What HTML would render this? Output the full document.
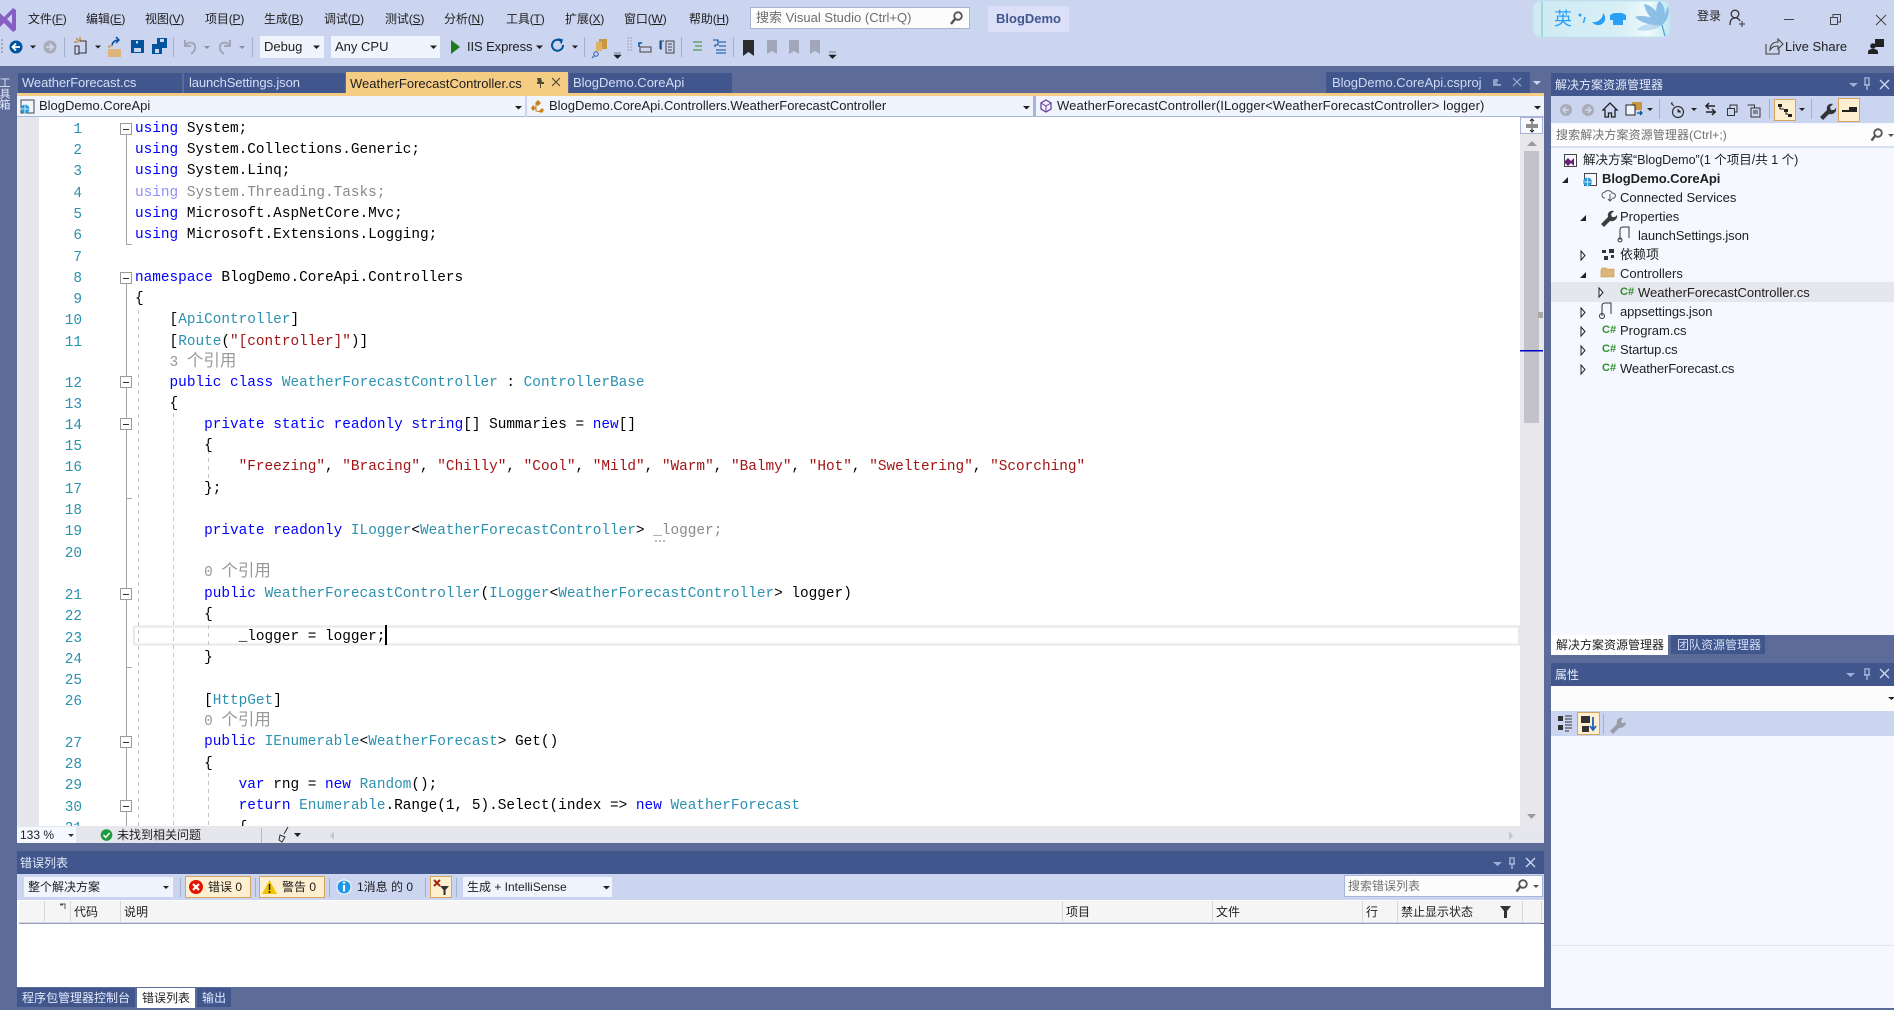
<!DOCTYPE html>
<html lang="zh-CN"><head><meta charset="utf-8"><title>BlogDemo - Visual Studio</title>
<style>
html,body{margin:0;padding:0;width:1894px;height:1010px;overflow:hidden;background:#ccd5f0}
body{position:relative;font-family:"Liberation Sans","Noto Sans CJK SC",sans-serif;font-size:13px;color:#1e1e1e}
svg.bg{position:absolute;left:0;top:0}
.t{position:absolute;white-space:nowrap;line-height:20px;height:20px}
.w{color:#e4ebfb}.z{font-size:12px}
.m{font-size:12px;letter-spacing:-.15px}
#code{position:absolute;left:0;top:1px;width:1520px;height:825px;overflow:hidden;font-family:"Liberation Mono","Noto Sans CJK SC",monospace;font-size:14.4px;color:#000}
#code div{position:absolute;white-space:pre;line-height:20px;height:20px;left:135px}
#code div.n{left:42px;width:40px;text-align:right;color:#2b91af;margin-top:1px}
#code div.l{color:#999}
#code div.l i{font-style:normal;font-size:16.5px}
b.k{font-weight:normal;color:#0000ff}b.y{font-weight:normal;color:#2b91af}b.s{font-weight:normal;color:#a31515}b.g{font-weight:normal;color:#8a8a8a}b.h{font-weight:normal;color:#8f8fff}
.tr{font-size:13px}
u{text-underline-offset:1px}
</style></head><body>
<svg class="bg" width="1894" height="1010" viewBox="0 0 1894 1010">
<rect width="1894" height="1010" fill="#ccd5f0"/>
<rect y="66" width="1894" height="944" fill="#5d6b99"/>
<!-- logo -->
<path d="M0 13l4 4 9-9 3 2v20l-3 2-9-9-4 4zM12 14l-5 5 5 5z" fill="#865fc5" fill-rule="evenodd"/>
<!-- search, badge -->
<rect x="750.500" y="7.500" width="219" height="21" fill="#fcfcfc" stroke="#a8b3cf"/>
<circle cx="958" cy="16" r="3.800" fill="none" stroke="#555" stroke-width="1.800"/><path d="M955 19l-4 5" stroke="#555" stroke-width="2.400"/>
<rect x="988" y="6" width="81" height="26" fill="#dbe0f8"/>
<!-- IME -->
<defs><linearGradient id="ime" x1="0" x2="1" y1="0" y2="0"><stop offset="0" stop-color="#cfeaf4"/><stop offset=".65" stop-color="#d8eff6"/><stop offset=".85" stop-color="#eefbfc"/><stop offset="1" stop-color="#bfe6f2"/></linearGradient></defs>
<rect x="1533" y="1" width="137" height="36" rx="8" fill="url(#ime)" stroke="#bde7ee"/>
<path d="M1542 1v36" stroke="#8dd5cf" stroke-width="1.500"/>
<circle cx="1580" cy="15" r="1.500" fill="#2aa0f5"/><path d="M1585 17l-1.500 6" stroke="#2aa0f5" stroke-width="1.500"/>
<path d="M1603 13a7 7 0 0 1-1 11c-3 2-8 1-10-2 5 1 11-3 11-9z" fill="#2aa0f5"/>
<path d="M1610 15l4-2h8l4 2 0 5-3 0v5h-10v-5l-3 0z" fill="#2aa0f5"/>
<g fill="#7fb6e3" opacity=".85"><path d="M1662 25c-6-6-8-16-3-24 6 3 8 15 3 24z"/><path d="M1662 25c-8-3-16-10-18-21 9 1 17 11 18 21z"/><path d="M1662 25c-7 1-20-1-27-8 8-3 22 1 27 8z"/><path d="M1662 25c-5 4-14 7-25 5 4-6 17-8 25-5z" opacity=".5"/><path d="M1662 25c2-7 4-15 6-19 2 6 0 14-6 19z"/></g>
<path d="M1662 25l3 11" stroke="#4c9acb" stroke-width="1.200" fill="none"/>
<!-- account -->
<circle cx="1735" cy="14" r="3.800" fill="none" stroke="#333" stroke-width="1.300"/><path d="M1730 25c0-5 2-7 5-7s4 1 5 3" fill="none" stroke="#333" stroke-width="1.300"/><path d="M1739 24h6M1742 21v6" stroke="#333"/>
<!-- window -->
<path d="M1784 19.500h10" stroke="#444"/>
<path d="M1830.500 17.500h7v7h-7zM1833 17v-2.500h7.500v7.500H1838" fill="none" stroke="#444"/>
<path d="M1876 15l10 10M1886 15l-10 10" stroke="#444"/>
<!-- share -->
<path d="M1766 44v10h13v-5M1770 50c0-5 3-8 8-8v-3l5 5-5 5v-3c-4 0-6 1-8 4z" fill="none" stroke="#444" stroke-width="1.100"/>
<rect x="1875" y="39" width="9" height="8" fill="#222"/><circle cx="1873" cy="46" r="2.800" fill="#222"/><path d="M1868 54v-2c0-2 2-3 5-3s5 1 5 3v2z" fill="#222"/>
<!-- toolbar -->
<circle cx="2" cy="40" r=".8" fill="#777"/><circle cx="2" cy="44" r=".8" fill="#777"/><circle cx="2" cy="48" r=".8" fill="#777"/><circle cx="2" cy="52" r=".8" fill="#777"/>
<circle cx="16" cy="47" r="6.500" fill="#00539c"/><path d="M20 47h-7M16 43.500l-3.500 3.500 3.500 3.500" stroke="#fff" stroke-width="1.800" fill="none"/>
<path d="M30 45.500h6l-3 3z M95 45.500h6l-3 3z M536 45.500h7l-3.500 3.500z M572 45.500h6l-3 3z" fill="#1e1e1e"/>
<circle cx="50" cy="47" r="6.500" fill="#a9acb6"/><path d="M46 47h7M49.500 43.500l3.500 3.500-3.500 3.500" stroke="#ccd5f0" stroke-width="1.800" fill="none"/>
<path d="M64.500 37v20M173.500 37v20M252.500 37v20M584.500 37v20M681.500 37v20M733.500 37v20" stroke="#a5b0cf"/>
<path d="M76 38l3 3M80 37v5M74 42h4" stroke="#c8811c" stroke-width="1.200"/><path d="M80 41h6v12h-7v-7" fill="none" stroke="#333" stroke-width="1.100"/><path d="M75 46h4v8h-4z" fill="none" stroke="#333"/>
<path d="M108 49h13v8h-13z" fill="#dcb67a"/><path d="M109 48v-2h4" stroke="#c8811c" fill="none"/><path d="M112 45c1-4 4-5 7-5m-3-3l3 3-3 3" stroke="#00539c" stroke-width="1.500" fill="none"/>
<path d="M131 40h13v13h-13zM134 40h7v4h-7z" fill="#00539c"/><rect x="136" y="41" width="2" height="2.500" fill="#ccd5f0"/><rect x="134" y="48" width="7" height="4" fill="#ccd5f0"/>
<path d="M157 38h10v10h-10zM152 44h10v10h-10z" fill="#00539c"/><rect x="160" y="39" width="4" height="3" fill="#ccd5f0"/><rect x="155" y="49" width="4" height="4" fill="#ccd5f0"/>
<path d="M185 40v6h6M185 46c3-5 9-4 10 0 .7 3-1 6-4 8" fill="none" stroke="#a1a7b8" stroke-width="2"/>
<path d="M230 40v6h-6M230 46c-3-5-9-4-10 0-.7 3 1 6 4 8" fill="none" stroke="#a1a7b8" stroke-width="2"/>
<path d="M204 46h6l-3 3zM239 46h6l-3 3z" fill="#8a8f9f"/>
<rect x="260" y="36" width="64" height="22" fill="#f0f4fd"/><rect x="331" y="36" width="109" height="22" fill="#f0f4fd"/>
<path d="M313 45.500h7l-3.500 3.500zM430 45.500h7l-3.500 3.500z" fill="#1e1e1e"/>
<path d="M451 40l9 7-9 7z" fill="#1f7a1f"/>
<path d="M563 45a5.500 5.500 0 1 1-2-4" fill="none" stroke="#00539c" stroke-width="2"/><path d="M558 38l5 1.500-1.500 5z" fill="#00539c"/>
<path d="M599 39h8v10h-8z" fill="#c8973f"/><path d="M596 42h6v9h-6z" fill="#e0b15f"/><circle cx="596" cy="54" r="2.200" fill="none" stroke="#1f5d9e"/><path d="M594 56l-2 2" stroke="#1f5d9e"/>
<path d="M614 55h7l-3.500 3.500zM614 53h7" fill="#1e1e1e" stroke="#1e1e1e" stroke-width=".6"/>
<g fill="#9097ab"><circle cx="628" cy="38" r=".7"/><circle cx="631" cy="38" r=".7"/><circle cx="628" cy="41" r=".7"/><circle cx="631" cy="41" r=".7"/><circle cx="628" cy="44" r=".7"/><circle cx="631" cy="44" r=".7"/><circle cx="628" cy="47" r=".7"/><circle cx="631" cy="47" r=".7"/><circle cx="628" cy="50" r=".7"/><circle cx="631" cy="50" r=".7"/></g>
<path d="M640 47h11v5h-11z" fill="none" stroke="#444"/><path d="M642 43h-3v4" fill="none" stroke="#00539c" stroke-width="1.500"/>
<path d="M664 41h-4v8M660 49h2M666 41h8v12h-8zM668 44h4M668 47h4M668 50h4" fill="none" stroke="#444"/><path d="M661 41v8" stroke="#00539c" stroke-width="1.500"/>
<path d="M693 42h9M695 46h7M693 50h9" stroke="#2c8a2c" stroke-width="1.100"/>
<path d="M713 40h5v5h-3v2M719 42h7M719 46h7M716 50h10M716 53h10" fill="none" stroke="#00539c" stroke-width="1.100"/>
<path d="M743 40h11v16l-5.500-4-5.500 4z" fill="#2b2b2b"/>
<path d="M767 40h10v14l-5-3-5 3z M789 40h10v14l-5-3-5 3z M810 40h10v14l-5-3-5 3z" fill="#a1a7b8"/>
<path d="M829 52h7M829 55h7l-3.500 3.500z" fill="#1e1e1e" stroke="#1e1e1e" stroke-width=".6"/>
<!-- left strip & tabs -->
<rect x="18" y="73" width="164" height="20" fill="#40568d"/><rect x="184" y="73" width="161" height="20" fill="#40568d"/>
<rect x="346" y="72" width="222" height="22" fill="#f5cc84"/><rect x="569" y="73" width="163" height="20" fill="#40568d"/>
<rect x="1326" y="72" width="204" height="21" fill="#40568d"/>
<rect x="17" y="93" width="1527" height="3" fill="#f5cc84"/>
<rect x="17" y="96" width="1527" height="20" fill="#f0f4fc"/><rect x="17" y="116" width="1527" height="1.500" fill="#a9b5d6"/>
<rect x="525" y="96" width="2" height="21" fill="#ccd5f0"/><rect x="1033" y="96" width="3" height="21" fill="#a9b5d6"/>
<path d="M537 78h4l1 4h2v2h-3v4h-1v-4h-3v-2h1z" fill="#514a37"/><path d="M552 78l8 8M560 78l-8 8" stroke="#514a37" stroke-width="1.200"/>
<path d="M1493 79l5 5h3v2h-8zM1494 79h4v3h-4z" fill="#92a0c8"/><path d="M1513 78l8 8M1521 78l-8 8" stroke="#9eacd0" stroke-width="1.200"/>
<path d="M1533 81h8l-4 4z" fill="#ccd5f0"/>
<!-- nav icons -->
<rect x="21" y="100" width="13" height="13" fill="#f0f4fc" stroke="#444"/><circle cx="25" cy="109" r="4.500" fill="#2a9ad6"/><path d="M20.500 109h9M25 104.500v9" stroke="#fff" stroke-width=".7"/>
<path d="M515 106h7l-3.500 3.500zM1023 106h7l-3.500 3.500zM1534 106h7l-3.500 3.500z" fill="#1e1e1e"/>
<path d="M538 100l3 3-3 3-3-3zM533 105l3 3-3 3-2-3zM542 108l2 2-2 3-3-2z" fill="#c8811c"/><path d="M536 104v7l5 1" stroke="#c8811c" fill="none"/>
<path d="M1046 100l5 3v6l-5 3-5-3v-6z" fill="#f0f4fc" stroke="#6b3fa0" stroke-width="1.300"/><path d="M1041 103l5 3 5-3M1046 106v6" stroke="#6b3fa0" fill="none"/>
<!-- editor -->
<rect x="17" y="117" width="1527" height="709" fill="#fff"/>
<rect x="17" y="117" width="22" height="709" fill="#e6e7ed"/>
<rect x="134" y="626.500" width="1385" height="18" fill="#fff" stroke="#e8e8ee" stroke-width="2.200"/>
<rect x="385" y="625" width="2" height="20" fill="#000"/>
<!-- indent guides -->
<g stroke="#c4c4c4" stroke-dasharray="4 4"><path d="M138.500 310V826M173.500 405V826M208.500 625V648M208.500 773V826M208.500 450V480"/></g>
<!-- unused-symbol dots -->
<path d="M655 541h2M659 541h2M663 541h2" stroke="#777"/>
<!-- outline -->
<g stroke="#a5a5a5" fill="none">
<path d="M126.500 134V244.500H132M126.500 283V826M126.500 667.500H132M126.500 498.500H132"/></g>
<g fill="#fff" stroke="#9a9a9a"><rect x="120.500" y="123.500" width="11" height="11"/><rect x="120.500" y="272.500" width="11" height="11"/><rect x="120.500" y="376.500" width="11" height="11"/><rect x="120.500" y="418.500" width="11" height="11"/><rect x="120.500" y="588.500" width="11" height="11"/><rect x="120.500" y="736.500" width="11" height="11"/><rect x="120.500" y="800.500" width="11" height="11"/></g>
<path d="M123 129.500h6M123 278.500h6M123 382.500h6M123 424.500h6M123 594.500h6M123 742.500h6M123 806.500h6" stroke="#333"/>
<!-- scroll -->
<rect x="1520" y="117" width="24" height="709" fill="#e8e8ec"/>
<rect x="1520.500" y="117.500" width="22" height="16" fill="#f7f9fe" stroke="#a9b5d6"/>
<path d="M1526 125h12M1526 127h12M1532 119v5M1532 128v4M1530 121l2-2 2 2M1530 130l2 2 2-2" stroke="#222" fill="none"/>
<path d="M1527 146l5-5 5 5z" fill="#9a9ba6"/><path d="M1527 814h9l-4.500 5z" fill="#9a9ba6"/>
<rect x="1524" y="151" width="15" height="272" fill="#c2c3c9"/>
<rect x="1538" y="312" width="5" height="6" fill="#a8a8a8"/>
<rect x="1520" y="350" width="23" height="1.500" fill="#0000c8"/>
<!-- status -->
<rect x="17" y="826" width="1527" height="17" fill="#e6e7ed"/>
<rect x="17" y="827" width="59" height="16" fill="#f6f8ff"/>
<path d="M68 834h6l-3 3z" fill="#333"/>
<circle cx="106.500" cy="835" r="5.800" fill="#1f9b3f"/><path d="M103.500 835l2.200 2.400 4-4.400" stroke="#fff" stroke-width="1.500" fill="none"/>
<path d="M261.500 828v15" stroke="#b8b9c4"/>
<path d="M288 827l-4 7M280 835l5 2-3 5-3-2z" fill="none" stroke="#333"/><path d="M294 833h7l-3.500 4z" fill="#222"/>
<path d="M334 831v9l-4-4.500z" fill="#c5c6cf"/><path d="M1509 831v9l4-4.500z" fill="#c5c6cf"/>
<!-- error list -->
<rect x="17" y="851" width="1527" height="23" fill="#40568d"/>
<rect x="17" y="874" width="1527" height="26" fill="#ccd5f0"/>
<rect x="17" y="900" width="1527" height="23" fill="#f5f5f5"/><rect x="19" y="922" width="1522" height="1.500" fill="#d4d6e2"/>
<rect x="17" y="924" width="1527" height="63" fill="#fff"/>
<rect x="17" y="900" width="2" height="24" fill="#fff"/><rect x="17" y="900" width="1527" height="1" fill="#fff"/>
<path d="M44.500 901v21M70.500 901v21M120.500 901v21M1062.500 901v21M1212.500 901v21M1362.500 901v21M1397.500 901v21M1522.500 901v21M1541.500 901v21" stroke="#d5d6de"/>
<path d="M60 904h5v5" fill="none" stroke="#555"/><rect x="60" y="904" width="3" height="1.500" fill="#555"/>
<path d="M1493 862h9l-4.500 4z" fill="#9fb0d8"/><path d="M1509 858h6M1510 859v5h4v-5M1509 864h6M1512 864v5" stroke="#d0d9f2" fill="none"/><path d="M1526 858l9 9M1535 858l-9 9" stroke="#d0d9f2" stroke-width="1.300"/>
<rect x="24" y="877" width="149" height="20" fill="#f0f4fd"/><path d="M163 886h6l-3 3z" fill="#222"/>
<path d="M180.500 878v19M255.500 878v19M329.500 878v19M425.500 878v19M456.500 878v19" stroke="#a5b0cf"/>
<rect x="185.500" y="876.500" width="65" height="21" fill="#fdefcf" stroke="#d6a45c"/>
<circle cx="196" cy="887" r="7" fill="#e51400"/><path d="M193 884l6 6M199 884l-6 6" stroke="#fff" stroke-width="2.200"/>
<rect x="259.500" y="876.500" width="65" height="21" fill="#fdefcf" stroke="#d6a45c"/>
<path d="M269.500 880l7.500 14h-15z" fill="#f5c400"/><path d="M269.500 884v6M269.500 891v2" stroke="#222" stroke-width="1.600"/>
<circle cx="344" cy="887" r="7" fill="#1c97ea" stroke="#fff"/><path d="M344 885v6.500" stroke="#fff" stroke-width="2.200"/><circle cx="344" cy="882.500" r="1.300" fill="#fff"/>
<rect x="430.500" y="876.500" width="21" height="21" fill="#fdefcf" stroke="#d6a45c"/>
<path d="M434 880l6 6M440 880l-6 6" stroke="#a1260d" stroke-width="2"/><path d="M440 886h9l-3.500 4v5h-2v-5z" fill="#333"/>
<rect x="463" y="877" width="149" height="20" fill="#f0f4fd"/><path d="M603 886h7l-3.500 3.500z" fill="#222"/>
<rect x="1344.500" y="875.500" width="198" height="21" fill="#fcfcfc" stroke="#a9b5d6"/>
<circle cx="1523" cy="884" r="3.800" fill="none" stroke="#555" stroke-width="1.800"/><path d="M1520 887l-3.500 4.500" stroke="#555" stroke-width="2.400"/>
<path d="M1533 885h6l-3 3z" fill="#555"/>
<path d="M1500 906h11l-4 5v7h-3v-7z" fill="#333"/>
<rect x="17" y="988" width="118" height="19" fill="#40568d"/><rect x="137" y="988" width="58" height="20" fill="#fff"/><rect x="197" y="988" width="34" height="19" fill="#40568d"/>
<!-- solution explorer -->
<rect x="1551" y="73" width="343" height="23" fill="#40568d"/>
<rect x="1551" y="96" width="343" height="27" fill="#ccd5f0"/>
<rect x="1551" y="123" width="343" height="25" fill="#f6f8ff"/><rect x="1553" y="125" width="341" height="21" fill="#fdfdfe"/><rect x="1551" y="146" width="343" height="2" fill="#ccd5f0" opacity=".7"/>
<rect x="1551" y="148" width="343" height="487" fill="#f6f8ff"/>
<rect x="1551" y="282" width="343" height="20" fill="#e6e7ed"/>
<path d="M1849 83h9l-4.500 4z" fill="#9fb0d8"/><path d="M1864 78h6M1865 79v6h4v-6M1864 85h6M1867 85v5" stroke="#d0d9f2" fill="none"/><path d="M1880 80l9 9M1889 80l-9 9" stroke="#d0d9f2" stroke-width="1.300"/>
<circle cx="1566" cy="110" r="6" fill="#a9acb6"/><path d="M1569 110h-6M1566 107l-3 3 3 3" stroke="#ccd5f0" stroke-width="1.500" fill="none"/>
<circle cx="1588" cy="110" r="6" fill="#a9acb6"/><path d="M1585 110h6M1588 107l3 3-3 3" stroke="#ccd5f0" stroke-width="1.500" fill="none"/>
<path d="M1610 103l7 7h-2v7h-3.500v-4h-3v4H1605v-7h-2z" fill="none" stroke="#222" stroke-width="1.300"/>
<rect x="1632" y="102" width="10" height="8" fill="#c8973f"/><rect x="1626" y="105" width="9" height="10" fill="#f0f4fd" stroke="#222"/><path d="M1637 113h5M1640 111l2 2-2 2M1642 116" stroke="#00539c" fill="none" stroke-width="1.300"/>
<path d="M1647 108h6l-3 3zM1691 108h6l-3 3zM1799 108h6l-3 3z" fill="#222"/>
<path d="M1659.500 99v20M1769.500 99v20M1811.500 99v20" stroke="#a5b0cf"/>
<circle cx="1678" cy="112" r="5.500" fill="none" stroke="#333" stroke-width="1.200"/><path d="M1678 109v3h3M1671 103l3 3" stroke="#333"/><path d="M1672 102v3" stroke="#333"/>
<path d="M1706 106h9M1709 103l-3 3 3 3M1716 112h-10M1712 109l3 3-3 3" stroke="#222" stroke-width="1.500" fill="none"/>
<rect x="1727.500" y="108.500" width="7" height="7" fill="none" stroke="#333"/><path d="M1730 108v-3h7v7h-2" fill="none" stroke="#333"/>
<path d="M1747.500 105h7v3M1751 108h9v9h-9zM1753 111h5M1753 113h5" fill="none" stroke="#333"/>
<rect x="1774.500" y="99.500" width="21" height="21" fill="#fdefcf" stroke="#d6a45c"/><path d="M1778 104h4v3h-4zM1784 109h4v3h-4zM1788 114h4v3h-4z" fill="#222"/><path d="M1780 107v2h4M1786 112v2h2" stroke="#222" fill="none"/>
<path d="M1820 117l7-7c-1-4 2-7 6-6l-3 3 1 3 3 0 2-2c1 4-3 7-7 6l-6 6z" fill="#333"/>
<rect x="1838.500" y="98.500" width="21" height="23" fill="#fdefcf" stroke="#d6a45c"/><path d="M1842 110h15v2h-15zM1849 107h8v3h-8z" fill="#222"/>
<circle cx="1878" cy="133" r="3.800" fill="none" stroke="#555" stroke-width="1.800"/><path d="M1875 136l-3.500 4.500" stroke="#555" stroke-width="2.400"/><path d="M1888 134h6l-3 3z" fill="#555"/>
<!-- tree icons -->
<rect x="1564.500" y="154.500" width="12" height="12" fill="none" stroke="#444"/><path d="M1565 161l3-3 3 3 3-3v8l-3-3-3 3-3-3z" fill="#68217a"/>
<rect x="1584.500" y="173.500" width="12" height="12" fill="none" stroke="#444"/><circle cx="1587.500" cy="182" r="4.500" fill="#2a9ad6"/><path d="M1583 182h9M1587.500 177.500v9" stroke="#fff" stroke-width=".7"/>
<path d="M1562 183l6-6v6z M1580 221l6-6v6z M1580 278l6-6v6z" fill="#222"/>
<path d="M1581 251v9l4-4.500zM1581 308v9l4-4.500zM1581 327v9l4-4.500zM1581 346v9l4-4.500zM1581 365v9l4-4.500zM1599 288v9l4-4.500z" fill="#f6f8ff" stroke="#222"/>
<path d="M1605 198c-2 0-3-1-3-3s2-3 3-3c1-2 6-2 7 1 3 0 4 2 3 4s-2 1-3 1M1610 194v7M1608 199l2 2 2-2" fill="none" stroke="#555"/>
<path d="M1601 224l7-7c-1-4 2-7 6-6l-3 3 1 3 3 0 2-2c1 4-3 7-7 6l-6 6z" fill="#3d3d3d"/>
<path d="M1620 240v-10c0-2 1-3 3-3h6v11" fill="none" stroke="#333"/><circle cx="1620" cy="240" r="2" fill="none" stroke="#333"/>
<path d="M1602 250h4v3h-4zM1609 249h5v4h-5zM1604 256h4v4h-4zM1611 255h3v3h-3z" fill="#333"/>
<path d="M1601 270l1-2h4l1 1h7v8h-13z" fill="#dcb67a" stroke="#c8973f" stroke-width=".6"/>
<path d="M1602 316v-10c0-2 1-3 3-3h6v11" fill="none" stroke="#333"/><circle cx="1602" cy="316" r="2.500" fill="none" stroke="#333"/>
<!-- panel lower -->
<rect x="1551" y="635" width="117" height="20" fill="#fff"/><rect x="1671" y="635" width="94" height="19" fill="#40568d"/>
<rect x="1551" y="663" width="343" height="23" fill="#40568d"/>
<rect x="1551" y="686" width="343" height="25" fill="#fcfcfc"/>
<rect x="1551" y="711" width="343" height="25" fill="#ccd5f0"/>
<rect x="1551" y="736" width="343" height="272" fill="#f6f8ff"/><rect x="1551" y="945" width="343" height="1" fill="#e3e6f0"/>
<path d="M1846 673h9l-4.500 4z" fill="#9fb0d8"/><path d="M1864 669h6M1865 670v5h4v-5M1864 675h6M1867 675v5" stroke="#d0d9f2" fill="none"/><path d="M1880 669l9 9M1889 669l-9 9" stroke="#d0d9f2" stroke-width="1.300"/>
<path d="M1888 697h7l-3.500 3z" fill="#222"/>
<rect x="1558" y="716" width="5" height="5" fill="#333"/><rect x="1558" y="725" width="5" height="5" fill="#333"/><path d="M1565 716h7M1565 719h7M1565 722h7M1565 725h7M1565 728h7M1565 731h4" stroke="#333"/>
<rect x="1577.500" y="712.500" width="22" height="22" fill="#fdefcf" stroke="#d6a45c"/><rect x="1581" y="716" width="9" height="7" fill="#333"/><rect x="1582" y="726" width="7" height="6" fill="#333"/><path d="M1593 717v12M1590 726l3 4 3-4" stroke="#1f5fbf" stroke-width="1.800" fill="none"/>
<path d="M1603.500 714v20" stroke="#a5b0cf"/>
<path d="M1610 731l7-7c-1-4 2-7 6-6l-2 3 1 2h2l2-1c0 4-3 6-7 6l-6 6z" fill="#9a9ba6"/>
</svg>

<!-- toolbox -->
<span class="t w" style="left:-3px;top:73px;width:14px;line-height:14px;height:40px;font-size:11px;writing-mode:vertical-rl;text-align:center">工具箱</span>
<!-- menu -->
<span class="t m" style="left:28px;top:9px">文件(<u>F</u>)</span>
<span class="t m" style="left:86px;top:9px">编辑(<u>E</u>)</span>
<span class="t m" style="left:145px;top:9px">视图(<u>V</u>)</span>
<span class="t m" style="left:205px;top:9px">项目(<u>P</u>)</span>
<span class="t m" style="left:264px;top:9px">生成(<u>B</u>)</span>
<span class="t m" style="left:324px;top:9px">调试(<u>D</u>)</span>
<span class="t m" style="left:385px;top:9px">测试(<u>S</u>)</span>
<span class="t m" style="left:444px;top:9px">分析(<u>N</u>)</span>
<span class="t m" style="left:506px;top:9px">工具(<u>T</u>)</span>
<span class="t m" style="left:565px;top:9px">扩展(<u>X</u>)</span>
<span class="t m" style="left:624px;top:9px">窗口(<u>W</u>)</span>
<span class="t m" style="left:689px;top:9px">帮助(<u>H</u>)</span>
<span class="t" style="left:756px;top:8px;color:#6d6d6d">搜索 Visual Studio (Ctrl+Q)</span>
<span class="t" style="left:996px;top:9px;font-weight:bold;color:#40568d">BlogDemo</span>
<span class="t" style="left:1554px;top:9px;color:#2aa0f5;font-size:18px">英</span>
<span class="t z" style="left:1697px;top:6px">登录</span>
<span class="t" style="left:1785px;top:37px">Live Share</span>
<!-- toolbar text -->
<span class="t" style="left:264px;top:37px">Debug</span>
<span class="t" style="left:335px;top:37px">Any CPU</span>
<span class="t" style="left:467px;top:37px;letter-spacing:-.1px">IIS Express</span>
<!-- tabs -->
<span class="t" style="left:22px;top:73px;color:#d5def5;letter-spacing:-.1px">WeatherForecast.cs</span>
<span class="t" style="left:189px;top:73px;color:#d5def5;letter-spacing:-.1px">launchSettings.json</span>
<span class="t" style="left:350px;top:74px">WeatherForecastController.cs</span>
<span class="t" style="left:573px;top:73px;color:#d5def5">BlogDemo.CoreApi</span>
<span class="t" style="left:1332px;top:73px;color:#cfd9f2">BlogDemo.CoreApi.csproj</span>
<span class="t" style="left:39px;top:96px">BlogDemo.CoreApi</span>
<span class="t" style="left:549px;top:96px">BlogDemo.CoreApi.Controllers.WeatherForecastController</span>
<span class="t" style="left:1057px;top:96px;letter-spacing:.12px">WeatherForecastController(ILogger&lt;WeatherForecastController&gt; logger)</span>

<div id="code">
<div class="n" style="top:118px">1</div><div class="n" style="top:139px">2</div><div class="n" style="top:160px">3</div><div class="n" style="top:182px">4</div><div class="n" style="top:203px">5</div><div class="n" style="top:224px">6</div><div class="n" style="top:246px">7</div><div class="n" style="top:267px">8</div><div class="n" style="top:288px">9</div><div class="n" style="top:309px">10</div><div class="n" style="top:331px">11</div><div class="n" style="top:372px">12</div><div class="n" style="top:393px">13</div><div class="n" style="top:414px">14</div><div class="n" style="top:435px">15</div><div class="n" style="top:456px">16</div><div class="n" style="top:478px">17</div><div class="n" style="top:499px">18</div><div class="n" style="top:520px">19</div><div class="n" style="top:542px">20</div><div class="n" style="top:584px">21</div><div class="n" style="top:605px">22</div><div class="n" style="top:627px">23</div><div class="n" style="top:648px">24</div><div class="n" style="top:669px">25</div><div class="n" style="top:690px">26</div><div class="n" style="top:732px">27</div><div class="n" style="top:753px">28</div><div class="n" style="top:774px">29</div><div class="n" style="top:796px">30</div><div class="n" style="top:817px">31</div>
<div style="top:118px"><b class="k">using</b> System;</div>
<div style="top:139px"><b class="k">using</b> System.Collections.Generic;</div>
<div style="top:160px"><b class="k">using</b> System.Linq;</div>
<div style="top:182px"><b class="h">using</b> <b class="g">System.Threading.Tasks;</b></div>
<div style="top:203px"><b class="k">using</b> Microsoft.AspNetCore.Mvc;</div>
<div style="top:224px"><b class="k">using</b> Microsoft.Extensions.Logging;</div>
<div style="top:267px"><b class="k">namespace</b> BlogDemo.CoreApi.Controllers</div>
<div style="top:288px">{</div>
<div style="top:309px">    [<b class="y">ApiController</b>]</div>
<div style="top:331px">    [<b class="y">Route</b>(<b class="s">"[controller]"</b>)]</div>
<div class="l" style="top:351px">    3 <i>个引用</i></div>
<div style="top:372px">    <b class="k">public</b> <b class="k">class</b> <b class="y">WeatherForecastController</b> : <b class="y">ControllerBase</b></div>
<div style="top:393px">    {</div>
<div style="top:414px">        <b class="k">private</b> <b class="k">static</b> <b class="k">readonly</b> <b class="k">string</b>[] Summaries = <b class="k">new</b>[]</div>
<div style="top:435px">        {</div>
<div style="top:456px">            <b class="s">"Freezing"</b>, <b class="s">"Bracing"</b>, <b class="s">"Chilly"</b>, <b class="s">"Cool"</b>, <b class="s">"Mild"</b>, <b class="s">"Warm"</b>, <b class="s">"Balmy"</b>, <b class="s">"Hot"</b>, <b class="s">"Sweltering"</b>, <b class="s">"Scorching"</b></div>
<div style="top:478px">        };</div>
<div style="top:520px">        <b class="k">private</b> <b class="k">readonly</b> <b class="y">ILogger</b>&lt;<b class="y">WeatherForecastController</b>&gt; <b class="g">_logger;</b></div>
<div class="l" style="top:561px">        0 <i>个引用</i></div>
<div style="top:583px">        <b class="k">public</b> <b class="y">WeatherForecastController</b>(<b class="y">ILogger</b>&lt;<b class="y">WeatherForecastController</b>&gt; logger)</div>
<div style="top:604px">        {</div>
<div style="top:626px">            _logger = logger;</div>
<div style="top:647px">        }</div>
<div style="top:690px">        [<b class="y">HttpGet</b>]</div>
<div class="l" style="top:710px">        0 <i>个引用</i></div>
<div style="top:731px">        <b class="k">public</b> <b class="y">IEnumerable</b>&lt;<b class="y">WeatherForecast</b>&gt; Get()</div>
<div style="top:753px">        {</div>
<div style="top:774px">            <b class="k">var</b> rng = <b class="k">new</b> <b class="y">Random</b>();</div>
<div style="top:795px">            <b class="k">return</b> <b class="y">Enumerable</b>.Range(1, 5).Select(index =&gt; <b class="k">new</b> <b class="y">WeatherForecast</b></div>
<div style="top:817px">            {</div>
</div>

<!-- status -->
<span class="t z" style="left:20px;top:825px">133 %</span>
<span class="t z" style="left:117px;top:825px">未找到相关问题</span>
<!-- error panel -->
<span class="t w z" style="left:20px;top:853px">错误列表</span>
<span class="t z" style="left:28px;top:877px">整个解决方案</span>
<span class="t z" style="left:208px;top:877px">错误 0</span>
<span class="t z" style="left:282px;top:877px">警告 0</span>
<span class="t z" style="left:357px;top:877px">1消息 的 0</span>
<span class="t z" style="left:467px;top:877px">生成 + IntelliSense</span>
<span class="t z" style="left:1348px;top:876px;color:#717171">搜索错误列表</span>
<span class="t z" style="left:74px;top:902px">代码</span>
<span class="t z" style="left:124px;top:902px">说明</span>
<span class="t z" style="left:1066px;top:902px">项目</span>
<span class="t z" style="left:1216px;top:902px">文件</span>
<span class="t z" style="left:1366px;top:902px">行</span>
<span class="t z" style="left:1401px;top:902px">禁止显示状态</span>
<span class="t w z" style="left:22px;top:988px">程序包管理器控制台</span>
<span class="t z" style="left:142px;top:988px">错误列表</span>
<span class="t w z" style="left:202px;top:988px">输出</span>
<!-- solution explorer -->
<span class="t w z" style="left:1555px;top:75px">解决方案资源管理器</span>
<span class="t z" style="left:1556px;top:125px;color:#717171;letter-spacing:.1px">搜索解决方案资源管理器(Ctrl+;)</span>
<span class="t" style="left:1583px;top:150px;font-size:12.5px">解决方案“BlogDemo”(1 个项目/共 1 个)</span>
<span class="t tr" style="left:1602px;top:169px;font-weight:bold;letter-spacing:-.05px">BlogDemo.CoreApi</span>
<span class="t tr" style="left:1620px;top:188px">Connected Services</span>
<span class="t tr" style="left:1620px;top:207px">Properties</span>
<span class="t tr" style="left:1638px;top:226px;letter-spacing:-.1px">launchSettings.json</span>
<span class="t tr" style="left:1620px;top:245px">依赖项</span>
<span class="t tr" style="left:1620px;top:264px">Controllers</span>
<span class="t tr" style="left:1638px;top:283px">WeatherForecastController.cs</span>
<span class="t tr" style="left:1620px;top:302px;letter-spacing:-.1px">appsettings.json</span>
<span class="t tr" style="left:1620px;top:321px">Program.cs</span>
<span class="t tr" style="left:1620px;top:340px;letter-spacing:-.1px">Startup.cs</span>
<span class="t tr" style="left:1620px;top:359px;letter-spacing:-.1px">WeatherForecast.cs</span>
<span class="t" style="left:1620px;top:282px;color:#2f8f2f;font-weight:bold;font-size:11px">C#</span>
<span class="t" style="left:1602px;top:320px;color:#2f8f2f;font-weight:bold;font-size:11px">C#</span>
<span class="t" style="left:1602px;top:339px;color:#2f8f2f;font-weight:bold;font-size:11px">C#</span>
<span class="t" style="left:1602px;top:358px;color:#2f8f2f;font-weight:bold;font-size:11px">C#</span>
<span class="t z" style="left:1556px;top:635px">解决方案资源管理器</span>
<span class="t z" style="left:1677px;top:635px;color:#d5def5">团队资源管理器</span>
<span class="t w z" style="left:1555px;top:665px">属性</span>
</body></html>
